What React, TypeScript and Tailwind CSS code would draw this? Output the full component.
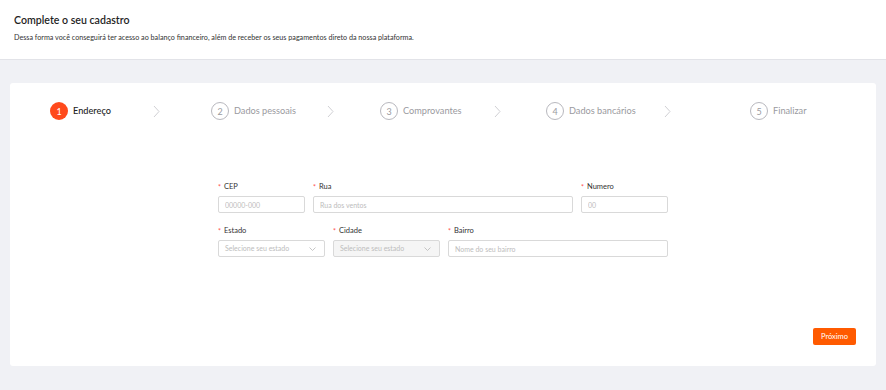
import React from 'react';

type Step = {
  n: number;
  label: string;
  active?: boolean;
  width: string;
  labelWidth: string;
};

const steps: Step[] = [
  { n: 1, label: 'Endereço', active: true, width: 'w-[161px]', labelWidth: 'w-[103px]' },
  { n: 2, label: 'Dados pessoais', width: 'w-[169px]', labelWidth: 'w-[116px]' },
  { n: 3, label: 'Comprovantes', width: 'w-[166px]', labelWidth: 'w-[114px]' },
  { n: 4, label: 'Dados bancários', width: 'w-[204px]', labelWidth: 'w-[118px]' },
  { n: 5, label: 'Finalizar', width: 'w-auto', labelWidth: 'w-auto' },
];

const Chevron = () => (
  <svg width="7" height="13" viewBox="0 0 7 13" fill="none">
    <polyline points="1,1 6,6.5 1,12" stroke="#d0d0d4" strokeWidth="1" />
  </svg>
);

const SmallCaret = () => (
  <svg width="7" height="4" viewBox="0 0 7 4" fill="none">
    <polyline points="0.5,0.5 3.5,3.5 6.5,0.5" stroke="#b8b8b8" strokeWidth="0.8" />
  </svg>
);

const Label: React.FC<{ text: string }> = ({ text }) => (
  <div className="flex items-center h-[10px] text-[7.5px] leading-none text-[#333]">
    <span className="text-[#ff4d4f] mr-[3px] text-[7px]">*</span>
    {text}
  </div>
);

const TextField: React.FC<{ label: string; placeholder: string; className: string }> = ({
  label,
  placeholder,
  className,
}) => (
  <div className={className}>
    <Label text={label} />
    <input
      readOnly
      placeholder={placeholder}
      className="block mt-[4px] w-full h-[17px] border border-[#d9d9d9] rounded-[2px] px-[6px] text-[7px] bg-white outline-none placeholder:text-[#bdbdbd]"
    />
  </div>
);

const SelectField: React.FC<{ label: string; disabled?: boolean; className: string }> = ({
  label,
  disabled,
  className,
}) => (
  <div className={className}>
    <Label text={label} />
    <div
      className={`mt-[4px] w-full h-[17px] border border-[#d9d9d9] rounded-[2px] pl-[6px] pr-[8px] flex items-center justify-between text-[7px] text-[#bdbdbd] ${
        disabled ? 'bg-[#f5f5f5]' : 'bg-white'
      }`}
    >
      <span>Selecione seu estado</span>
      <SmallCaret />
    </div>
  </div>
);

export default function App() {
  return (
    <div className="h-[390px] w-full bg-[#f0f1f5] font-['Lato','Noto_Sans',sans-serif]">
      {/* Header */}
      <header className="h-[60px] bg-white border-b border-[#e2e3e8] px-[14px] pt-[13px]">
        <h1 className="text-[10.6px] leading-[15px] font-semibold text-[#1f1f1f]">
          Complete o seu cadastro
        </h1>
        <p className="mt-[5px] text-[7.2px] leading-[10px] text-[#333]">
          Dessa forma você conseguirá ter acesso ao balanço financeiro, além de receber os seus pagamentos
          direto da nossa plataforma.
        </p>
      </header>

      <main className="px-[10px] pt-[23px]">
        <div className="h-[283px] bg-white rounded-[3px] flex flex-col pl-[40px] pr-[20px] pt-[19px] pb-[21px]">
          {/* Steps */}
          <div className="flex items-center h-[18px]">
            {steps.map((s, i) => (
              <div key={s.n} className={`flex items-center ${s.width}`}>
                <div className={`flex items-center ${s.labelWidth}`}>
                  <div
                    className={`w-[18px] h-[18px] rounded-full flex items-center justify-center text-[9px] leading-none shrink-0 ${
                      s.active
                        ? 'bg-[#ff4a1c] text-white'
                        : 'border border-[#b8b8be] text-[#9a9aa0]'
                    }`}
                  >
                    {s.n}
                  </div>
                  <span
                    className={`ml-[5px] text-[9.2px] leading-none whitespace-nowrap ${
                      s.active ? 'text-[#222] font-medium' : 'text-[#9a9aa0]'
                    }`}
                  >
                    {s.label}
                  </span>
                </div>
                {i < steps.length - 1 && <Chevron />}
              </div>
            ))}
          </div>

          {/* Form */}
          <div className="w-[450px] self-center -ml-[20px] mt-[62px] flex flex-col gap-[13px]">
            <div className="flex gap-[8px]">
              <TextField className="w-[87px]" label="CEP" placeholder="00000-000" />
              <TextField className="flex-1" label="Rua" placeholder="Rua dos ventos" />
              <TextField className="w-[87px]" label="Numero" placeholder="00" />
            </div>
            <div className="flex gap-[8px]">
              <SelectField className="w-[107px]" label="Estado" />
              <SelectField className="w-[107px]" label="Cidade" disabled />
              <TextField className="flex-1" label="Bairro" placeholder="Nome do seu bairro" />
            </div>
          </div>

          {/* Footer */}
          <div className="mt-auto flex justify-end">
            <button className="w-[43px] h-[17px] bg-[#ff5a00] text-white text-[7.5px] rounded-[2px]">
              Próximo
            </button>
          </div>
        </div>
      </main>
    </div>
  );
}
